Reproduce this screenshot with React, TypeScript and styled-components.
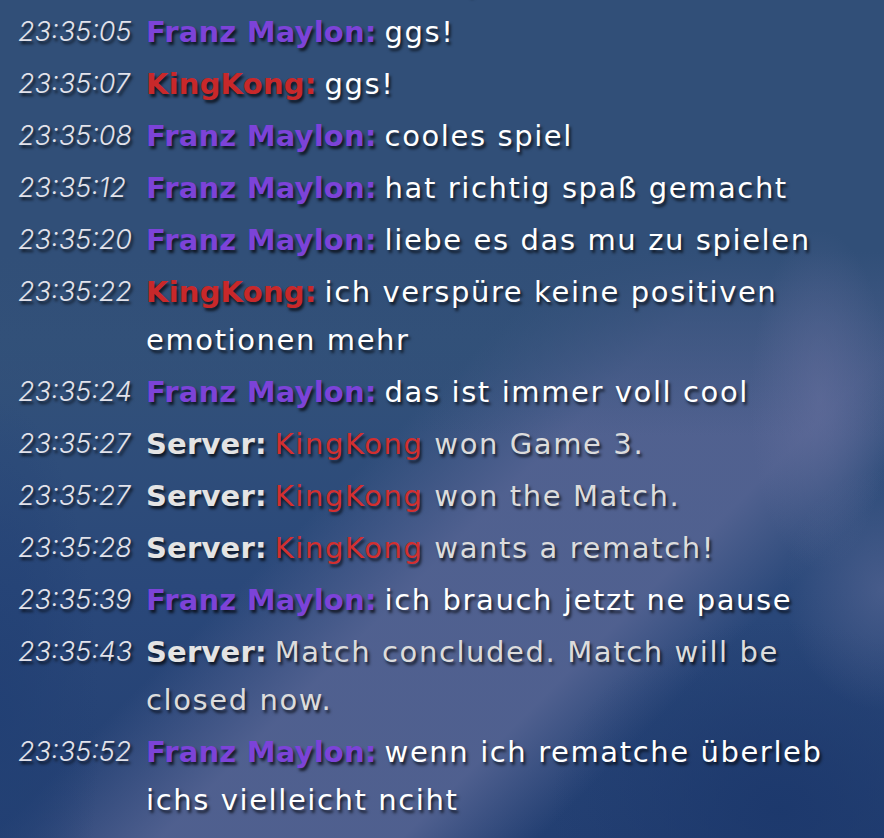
import React from "react";
import styled, { createGlobalStyle } from "styled-components";

const Global = createGlobalStyle`
  html, body { margin: 0; padding: 0; }
  body { background: #2f4b6e; }
`;

const Page = styled.div`
  width: 884px;
  height: 838px;
  overflow: hidden;
  box-sizing: border-box;
  display: flex;
  flex-direction: column;
  justify-content: flex-end;
  padding: 0 38px 14px 18px;
  font-family: "DejaVu Sans", Inter, sans-serif;
  background:
    radial-gradient(ellipse 70px 170px at 820px 400px, rgba(100, 110, 156, 0.6), rgba(100, 110, 156, 0) 100%),
    radial-gradient(ellipse 100px 120px at 884px 590px, rgba(95, 108, 152, 0.55), rgba(95, 108, 152, 0) 100%),
    radial-gradient(ellipse 230px 190px at 780px 810px, rgba(28, 56, 108, 0.9), rgba(28, 56, 108, 0) 100%),
    radial-gradient(ellipse 100px 320px at 0px 720px, rgba(34, 64, 116, 0.9), rgba(34, 64, 116, 0) 100%),
    linear-gradient(180deg, rgba(49, 79, 120, 1) 0%, rgba(49, 79, 120, 1) 30%, rgba(49, 79, 120, 0) 52%),
    linear-gradient(135deg, rgba(84, 99, 146, 0) 48%, rgba(84, 99, 146, 0.9) 58%, rgba(84, 99, 146, 0.9) 72%, rgba(84, 99, 146, 0) 80%),
    linear-gradient(180deg, #2f4a6d 0%, #33527a 40%, #2a487a 70%, #233f72 100%);
`;

const Row = styled.div`
  display: grid;
  grid-template-columns: 128px 1fr;
  line-height: 48px;
  margin-top: 4px;
  text-shadow: 2px 3px 3px rgba(0, 0, 0, 0.7);
`;

const Time = styled.span`
  font-family: Inter, "DejaVu Sans", sans-serif;
  font-size: 27px;
  font-style: italic;
  font-weight: 300;
  color: #e2e2ea;
  white-space: nowrap;
`;

const Body = styled.div<{ $server?: boolean }>`
  font-size: 29px;
  letter-spacing: 1.6px;
  color: ${(p) => (p.$server ? "#dcdcdc" : "#ffffff")};
  font-weight: 400;
`;

const Name = styled.span<{ $color: string }>`
  font-weight: 700;
  letter-spacing: 0.2px;
  color: ${(p) => p.$color};
  margin-right: 8px;
`;

const Mention = styled.span`
  color: #d32f2f;
`;

const PURPLE = "#7c43d8";
const RED = "#c8282a";
const GREY = "#e4e4e4";

type Msg = {
  t: string;
  who: "franz" | "king" | "server";
  text: React.ReactNode;
};

const names = {
  franz: { label: "Franz Maylon:", color: PURPLE },
  king: { label: "KingKong:", color: RED },
  server: { label: "Server:", color: GREY },
};

const msgs: Msg[] = [
  { t: "23:35:02", who: "server", text: "Game 3 is up." },
  { t: "23:35:05", who: "franz", text: "ggs!" },
  { t: "23:35:07", who: "king", text: "ggs!" },
  { t: "23:35:08", who: "franz", text: "cooles spiel" },
  { t: "23:35:12", who: "franz", text: "hat richtig spaß gemacht" },
  { t: "23:35:20", who: "franz", text: "liebe es das mu zu spielen" },
  { t: "23:35:22", who: "king", text: "ich verspüre keine positiven emotionen mehr" },
  { t: "23:35:24", who: "franz", text: "das ist immer voll cool" },
  { t: "23:35:27", who: "server", text: <><Mention>KingKong</Mention> won Game 3.</> },
  { t: "23:35:27", who: "server", text: <><Mention>KingKong</Mention> won the Match.</> },
  { t: "23:35:28", who: "server", text: <><Mention>KingKong</Mention> wants a rematch!</> },
  { t: "23:35:39", who: "franz", text: "ich brauch jetzt ne pause" },
  { t: "23:35:43", who: "server", text: "Match concluded. Match will be closed now." },
  { t: "23:35:52", who: "franz", text: "wenn ich rematche überleb ichs vielleicht nciht" },
];

export default function App() {
  return (
    <>
      <Global />
      <Page>
        {msgs.map((m, i) => (
          <Row key={i}>
            <Time>{m.t}</Time>
            <Body $server={m.who === "server"}>
              <Name $color={names[m.who].color}>{names[m.who].label}</Name>
              {m.text}
            </Body>
          </Row>
        ))}
      </Page>
    </>
  );
}
